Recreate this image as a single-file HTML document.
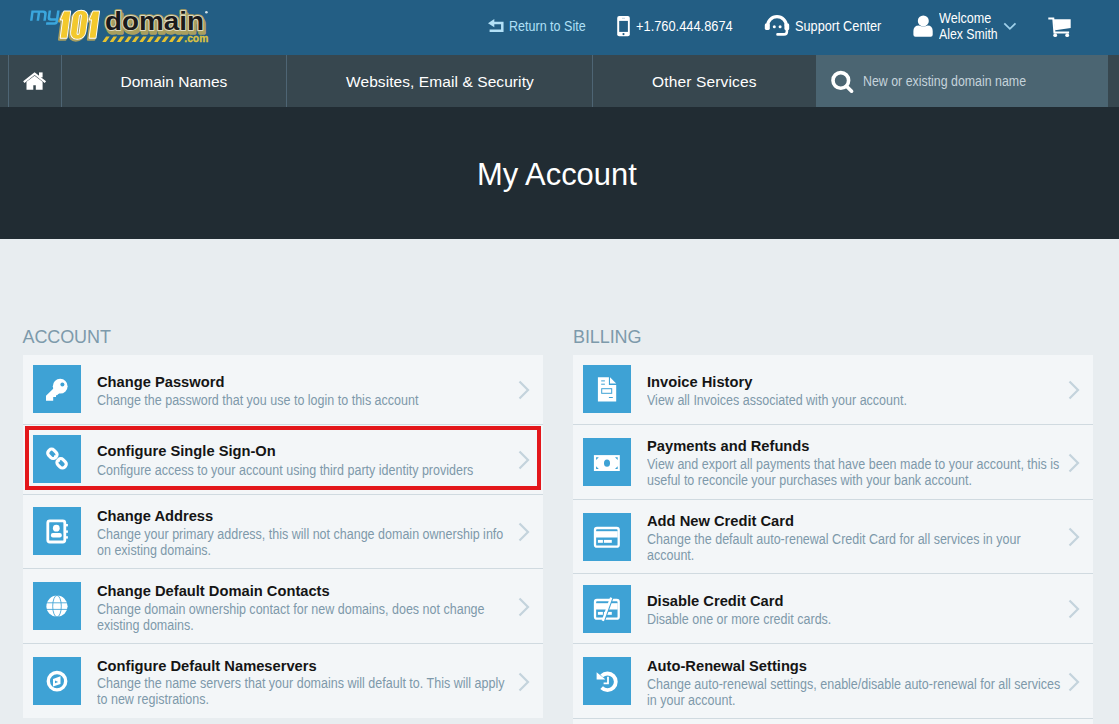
<!DOCTYPE html>
<html><head><meta charset="utf-8">
<style>
*{margin:0;padding:0;box-sizing:border-box}
html,body{width:1119px;height:724px;overflow:hidden}
body{font-family:"Liberation Sans",sans-serif;background:#e8edf0;position:relative}
.abs{position:absolute;white-space:nowrap}
.hd{position:absolute;white-space:nowrap;font-size:14px;line-height:14px;color:#fff;transform-origin:0 0}
.navt{position:absolute;white-space:nowrap;font-size:15.5px;line-height:15.5px;color:#fff}
.card{width:520px;background:#f3f6f8}
.sepl{width:520px;height:1px;background:#d0dae0}
.ttl{font-size:15.5px;line-height:18px;font-weight:bold;color:#151515;transform-origin:0 0;transform:scaleX(0.948)}
.dsc{font-size:14px;line-height:16px;color:#7e99aa;transform-origin:0 0;transform:scaleX(0.894)}
.sect{position:absolute;font-size:18px;line-height:18px;color:#7d9aab;letter-spacing:-0.1px}
</style></head><body>
<div class="abs" style="left:0;top:0;width:1119px;height:55px;background:#235e84"></div>
<div class="abs" style="left:0;top:55px;width:1119px;height:52px;background:#37474f"></div>
<div class="abs" style="left:8px;top:55px;width:1px;height:52px;background:#4e6574"></div>
<div class="abs" style="left:61px;top:55px;width:1px;height:52px;background:#4e6574"></div>
<div class="abs" style="left:286px;top:55px;width:1px;height:52px;background:#4e6574"></div>
<div class="abs" style="left:592px;top:55px;width:1px;height:52px;background:#4e6574"></div>
<div class="abs" style="left:816px;top:55px;width:292px;height:52px;background:#4b6572"></div>
<div class="abs" style="left:0;top:107px;width:1119px;height:132px;background:#212c33"></div>

<svg class="abs" style="left:0;top:0" width="220" height="55" viewBox="0 0 220 55">
 <g transform="translate(2.84 0) skewX(-7.8)" fill="#3ba7dd">
  <path d="M30 20.7 V10.4 H42 Q45.8 10.4 45.8 14 V20.7 H43.3 V14.5 Q43.3 12.8 41.8 12.8 H39.1 V20.7 H36.6 V12.8 H32.5 V20.7 Z"/>
  <path transform="translate(-0.8 0)" d="M48 10.4 H50.5 V17 Q50.5 18.3 51.8 18.3 H56.5 V10.4 H59 V21.5 Q59 24.7 55.8 24.7 H47.3 V22.3 H55.3 Q56.5 22.3 56.5 21 V20.7 H51.5 Q48 20.7 48 17.2 Z"/>
 </g>
 <defs><g id="d101" transform="translate(5.03 0) skewX(-7.6)">
  <path d="M60.7 11.5 H66.7 V37.8 H60.7 V19.6 H58.4 Z"/>
  <path fill-rule="evenodd" d="M77.5 10.7 C81.9 10.7 84.7 13.5 84.7 18 V31.5 C84.7 36 81.9 38.8 77.5 38.8 C73.1 38.8 70.3 36 70.3 31.5 V18 C70.3 13.5 73.1 10.7 77.5 10.7 Z M77.5 14.4 C76.6 14.4 76 15 76 16 V33.2 C76 34.2 76.6 34.9 77.5 34.9 C78.4 34.9 79 34.2 79 33.2 V16 C79 15 78.4 14.4 77.5 14.4 Z"/>
  <path d="M89.6 11.5 H95.6 V37.8 H89.6 V19.6 H87.3 Z"/>
 </g></defs>
 <use href="#d101" transform="translate(-1.4 1.6)" fill="#a99f5e" stroke="#a99f5e" stroke-width="2.6" stroke-linejoin="round"/>
 <use href="#d101" fill="#fff" stroke="#fff" stroke-width="1.9" stroke-linejoin="round"/>
 <use href="#d101" fill="#f3c92e"/>
 <g font-family="Liberation Sans" font-weight="bold" font-size="25.5">
  <text x="106.5" y="32.8" fill="#a99f5e" stroke="#a99f5e" stroke-width="3.6" stroke-linejoin="round" textLength="99" lengthAdjust="spacingAndGlyphs">domain</text>
  <text x="105" y="30.2" fill="#a99f5e" stroke="#a99f5e" stroke-width="3.6" stroke-linejoin="round" textLength="99" lengthAdjust="spacingAndGlyphs">domain</text>
  <text x="105" y="30.2" fill="#dcd8bc" stroke="#dcd8bc" stroke-width="1.9" stroke-linejoin="round" textLength="99" lengthAdjust="spacingAndGlyphs">domain</text>
  <text x="105" y="30.2" fill="#1b1b1b" textLength="99" lengthAdjust="spacingAndGlyphs">domain</text>
 </g>
 <g fill="#e5c231">
  <path d="M102.3 42 l3.8 -5.6 h3.6 l-3.8 5.6z M109.7 42 l3.8 -5.6 h3.6 l-3.8 5.6z M117.1 42 l3.8 -5.6 h3.6 l-3.8 5.6z M124.5 42 l3.8 -5.6 h3.6 l-3.8 5.6z M131.9 42 l3.8 -5.6 h3.6 l-3.8 5.6z M139.3 42 l3.8 -5.6 h3.6 l-3.8 5.6z M146.7 42 l3.8 -5.6 h3.6 l-3.8 5.6z M154.1 42 l3.8 -5.6 h3.6 l-3.8 5.6z M161.5 42 l3.8 -5.6 h3.6 l-3.8 5.6z M168.9 42 l3.8 -5.6 h3.6 l-3.8 5.6z M176.3 42 l3.8 -5.6 h3.6 l-3.8 5.6z"/>
 </g>
 <text x="184.3" y="42.2" font-family="Liberation Sans" font-weight="bold" font-size="10" fill="#dcc443" stroke="#dcc443" stroke-width="0.3" textLength="24" lengthAdjust="spacingAndGlyphs">.com</text>
 <circle cx="206.4" cy="12.3" r="1.3" fill="#cfe0ea"/>
</svg>
<div class="hd" style="left:509px;top:19px;color:#b0e0f7;transform:scaleX(0.895)">Return to Site</div>
<div class="hd" style="left:636px;top:19px;transform:scaleX(0.917)">+1.760.444.8674</div>
<div class="hd" style="left:795px;top:19.2px;transform:scaleX(0.909)">Support Center</div>
<div class="hd" style="left:939.3px;top:11px;transform:scaleX(0.90)">Welcome</div>
<div class="hd" style="left:939.3px;top:26.7px;transform:scaleX(0.877)">Alex Smith</div>
<div class="navt" style="left:120.5px;top:73.6px">Domain Names</div>
<div class="navt" style="left:346px;top:73.6px;letter-spacing:0.08px">Websites, Email &amp; Security</div>
<div class="navt" style="left:652px;top:73.6px;letter-spacing:0.15px">Other Services</div>
<div class="hd" style="left:862.7px;top:74.1px;color:#c5d3db;transform:scaleX(0.884)">New or existing domain name</div>

<svg class="abs" style="left:0;top:0" width="1119" height="107" viewBox="0 0 1119 107">
 <!-- return icon -->
 <path d="M488 23.2 L494.3 19 L494.3 27.3 Z" fill="#b3e0f6"/>
 <path d="M494 23.1 H502.3 V30.7 H489.6" fill="none" stroke="#b3e0f6" stroke-width="2.5"/>
 <!-- phone -->
 <rect x="617.2" y="15.9" width="12.6" height="20.3" rx="2" fill="#fff"/>
 <rect x="619.2" y="20.9" width="8.7" height="11" fill="#235e84"/>
 <circle cx="623.5" cy="34.1" r="1.1" fill="#235e84"/>
 <path d="M622 18.3 H625" stroke="#8fb0c6" stroke-width="0.6"/>
 <!-- headset -->
 <path d="M767.6 26 A9.4 9.4 0 0 1 786.4 26" fill="none" stroke="#fff" stroke-width="3.2"/>
 <rect x="764.8" y="23.6" width="5" height="6.4" rx="1.4" fill="#fff"/>
 <rect x="784.4" y="23.6" width="4.8" height="6.6" rx="1.4" fill="#fff"/>
 <circle cx="774.3" cy="26.7" r="1.5" fill="#fff"/><circle cx="780.1" cy="26.7" r="1.5" fill="#fff"/>
 <path d="M786.9 29 V31.5 Q786.9 34.4 784 34.4 H777.5" fill="none" stroke="#fff" stroke-width="2.6" stroke-linecap="round"/>
 <!-- user -->
 <circle cx="923.3" cy="20.9" r="5.5" fill="#fff"/>
 <path d="M913.4 34.7 V31 Q913.4 25.4 919 25.4 Q923.3 27.6 927.6 25.4 Q932.7 25.4 932.7 31 V34.7 Q932.7 36.7 930.7 36.7 H915.4 Q913.4 36.7 913.4 34.7 Z" fill="#fff"/>
 <!-- chevron down -->
 <path d="M1004.3 23.3 L1009.9 28.8 L1015.5 23.3" fill="none" stroke="#9fd0ea" stroke-width="1.8"/>
 <!-- cart -->
 <path d="M1048.3 18.6 H1053.3 L1054.4 32.5 H1069.1" fill="none" stroke="#fff" stroke-width="2"/>
 <path d="M1053.3 19.2 H1070.7 V28 L1055.2 30.2 Z" fill="#fff"/>
 <circle cx="1055.2" cy="35.2" r="1.9" fill="#fff"/><circle cx="1067.2" cy="35.2" r="1.9" fill="#fff"/>
 <!-- home -->
 <path d="M23.8 82.1 L34.6 73.6 L45.4 82.1" fill="none" stroke="#fff" stroke-width="2.1"/>
 <rect x="39" y="72.4" width="3.6" height="5" fill="#fff"/>
 <path d="M26.5 81.8 L34.6 75.8 L42.6 81.8 V89.7 H35.8 V85.2 H33.3 V89.7 H26.5 Z" fill="#fff"/>
 <!-- search -->
 <circle cx="840.8" cy="80.4" r="7.8" fill="none" stroke="#fff" stroke-width="3.6"/>
 <path d="M846.5 86.2 L851.6 91.2" stroke="#fff" stroke-width="3.6" stroke-linecap="round"/>
</svg>
<div class="abs" style="left:477.4px;top:157.6px;font-size:32px;line-height:32px;color:#fff;transform-origin:0 0;transform:scaleX(0.966)">My Account</div>
<div class="sect" style="left:22.5px;top:327.6px">ACCOUNT</div>
<div class="sect" style="left:573px;top:327.6px">BILLING</div>
<div class="abs card" style="left:23px;top:355px;height:69px"></div>
<div class="abs sepl" style="left:23px;top:424px"></div>
<svg class="abs" style="left:33px;top:365px" width="48" height="48" viewBox="0 0 48 48"><rect width="48" height="48" fill="#3ea2d5"/><circle cx="27.2" cy="21.2" r="7.4" fill="#fff"/><circle cx="29.4" cy="19.6" r="2" fill="#3ea2d5"/>
<path d="M21.5 22.5 L26.5 28 L24 30.3 L23 30.3 L23 32 L20.2 32 L20.2 35.8 L13 35.8 L13 30.8 Z" fill="#fff"/></svg>
<div class="abs ttl" style="left:97px;top:373.03px">Change Password</div>
<div class="abs dsc" style="left:97px;top:391.85px">Change the password that you use to login to this account</div>
<svg class="abs" style="left:517px;top:380.0px" width="14" height="20" viewBox="0 0 14 20"><path d="M2.5 1.5 L11 10 L2.5 18.5" fill="none" stroke="#c4d3dc" stroke-width="2.2"/></svg>
<div class="abs card" style="left:23px;top:425px;height:69px"></div>
<div class="abs sepl" style="left:23px;top:494px"></div>
<svg class="abs" style="left:33px;top:435px" width="48" height="48" viewBox="0 0 48 48"><rect width="48" height="48" fill="#3ea2d5"/><g transform="rotate(45 19.4 18.8)"><rect x="14.6" y="15.1" width="9.6" height="7.4" rx="3.2" fill="none" stroke="#fff" stroke-width="3.2"/><rect x="22" y="18" width="2.6" height="1.6" fill="#fff"/></g>
<g transform="rotate(45 28.6 28.3)"><rect x="23.8" y="24.6" width="9.6" height="7.4" rx="3.2" fill="none" stroke="#fff" stroke-width="3.2"/><rect x="23.4" y="27.5" width="2.6" height="1.6" fill="#fff"/></g></svg>
<div class="abs ttl" style="left:97px;top:442.43px">Configure Single Sign-On</div>
<div class="abs dsc" style="left:97px;top:461.95px">Configure access to your account using third party identity providers</div>
<svg class="abs" style="left:517px;top:450.0px" width="14" height="20" viewBox="0 0 14 20"><path d="M2.5 1.5 L11 10 L2.5 18.5" fill="none" stroke="#c4d3dc" stroke-width="2.2"/></svg>
<div class="abs card" style="left:23px;top:495px;height:73px"></div>
<div class="abs sepl" style="left:23px;top:568px"></div>
<svg class="abs" style="left:33px;top:507px" width="48" height="48" viewBox="0 0 48 48"><rect width="48" height="48" fill="#3ea2d5"/><rect x="14.8" y="13.8" width="17" height="21.2" rx="2" fill="none" stroke="#fff" stroke-width="2.8"/>
<rect x="33" y="17" width="1.9" height="2.4" fill="#fff"/><rect x="33" y="23.4" width="1.9" height="2.4" fill="#fff"/><rect x="33" y="29.2" width="1.9" height="2.4" fill="#fff"/>
<circle cx="23.3" cy="21.2" r="3.4" fill="#fff"/><rect x="17.9" y="26.1" width="10.9" height="4.4" rx="2" fill="#fff"/></svg>
<div class="abs ttl" style="left:97px;top:507.43px">Change Address</div>
<div class="abs dsc" style="left:97px;top:525.95px">Change your primary address, this will not change domain ownership info<br>on existing domains.</div>
<svg class="abs" style="left:517px;top:522.0px" width="14" height="20" viewBox="0 0 14 20"><path d="M2.5 1.5 L11 10 L2.5 18.5" fill="none" stroke="#c4d3dc" stroke-width="2.2"/></svg>
<div class="abs card" style="left:23px;top:569px;height:74px"></div>
<div class="abs sepl" style="left:23px;top:643px"></div>
<svg class="abs" style="left:33px;top:582px" width="48" height="48" viewBox="0 0 48 48"><rect width="48" height="48" fill="#3ea2d5"/><circle cx="24" cy="24.2" r="10.6" fill="#fff"/>
<path d="M13 20.8 H35 M13 27.4 H35" stroke="#3ea2d5" stroke-width="0.85"/>
<ellipse cx="24" cy="24.2" rx="4.3" ry="10.8" fill="none" stroke="#3ea2d5" stroke-width="0.85"/></svg>
<div class="abs ttl" style="left:97px;top:582.43px">Change Default Domain Contacts</div>
<div class="abs dsc" style="left:97px;top:600.75px">Change domain ownership contact for new domains, does not change<br>existing domains.</div>
<svg class="abs" style="left:517px;top:596.5px" width="14" height="20" viewBox="0 0 14 20"><path d="M2.5 1.5 L11 10 L2.5 18.5" fill="none" stroke="#c4d3dc" stroke-width="2.2"/></svg>
<div class="abs card" style="left:23px;top:644px;height:74px"></div>
<svg class="abs" style="left:33px;top:657px" width="48" height="48" viewBox="0 0 48 48"><rect width="48" height="48" fill="#3ea2d5"/><circle cx="24" cy="24.2" r="8.7" fill="none" stroke="#fff" stroke-width="3.4"/>
<path d="M20 21.9 L27.5 19.2 L27.5 26.9 L20 29.6 Z" fill="#fff"/><path d="M22 23.5 L25.2 25 L22 26.3 Z" fill="#3ea2d5"/></svg>
<div class="abs ttl" style="left:97px;top:657.23px">Configure Default Nameservers</div>
<div class="abs dsc" style="left:97px;top:675.45px">Change the name servers that your domains will default to. This will apply<br>to new registrations.</div>
<svg class="abs" style="left:517px;top:671.5px" width="14" height="20" viewBox="0 0 14 20"><path d="M2.5 1.5 L11 10 L2.5 18.5" fill="none" stroke="#c4d3dc" stroke-width="2.2"/></svg>
<div class="abs card" style="left:573px;top:355px;height:69px"></div>
<div class="abs sepl" style="left:573px;top:424px"></div>
<svg class="abs" style="left:583px;top:365px" width="48" height="48" viewBox="0 0 48 48"><rect width="48" height="48" fill="#3ea2d5"/><path d="M14.9 12.3 H25.9 V19.9 H33.2 V36.5 H14.9 Z" fill="#fff"/><path d="M27 12.3 L33.2 18.6 H27 Z" fill="#fff"/>
<path d="M18.2 15.9 H21.9 M18.2 19.2 H21.9 M25.9 32.5 H29.8" stroke="#3ea2d5" stroke-width="1"/>
<rect x="18.7" y="23.7" width="10" height="4.6" fill="none" stroke="#3ea2d5" stroke-width="1"/></svg>
<div class="abs ttl" style="left:647px;top:372.93px">Invoice History</div>
<div class="abs dsc" style="left:647px;top:391.75px">View all Invoices associated with your account.</div>
<svg class="abs" style="left:1067px;top:380.0px" width="14" height="20" viewBox="0 0 14 20"><path d="M2.5 1.5 L11 10 L2.5 18.5" fill="none" stroke="#c4d3dc" stroke-width="2.2"/></svg>
<div class="abs card" style="left:573px;top:425px;height:74px"></div>
<div class="abs sepl" style="left:573px;top:499px"></div>
<svg class="abs" style="left:583px;top:438px" width="48" height="48" viewBox="0 0 48 48"><rect width="48" height="48" fill="#3ea2d5"/><rect x="10.9" y="17.1" width="25.9" height="15.9" fill="#fff"/>
<ellipse cx="24" cy="25.2" rx="3" ry="3.6" fill="#3ea2d5"/>
<path d="M13.1 19.3 h2.7 l-2.7 2.7 z M34.7 19.3 h-2.7 l2.7 2.7 z M13.1 31 h2.7 l-2.7 -2.7 z M34.7 31 h-2.7 l2.7 -2.7 z" fill="#3ea2d5"/></svg>
<div class="abs ttl" style="left:647px;top:437.33px">Payments and Refunds</div>
<div class="abs dsc" style="left:647px;top:456.35px">View and export all payments that have been made to your account, this is<br>useful to reconcile your purchases with your bank account.</div>
<svg class="abs" style="left:1067px;top:452.5px" width="14" height="20" viewBox="0 0 14 20"><path d="M2.5 1.5 L11 10 L2.5 18.5" fill="none" stroke="#c4d3dc" stroke-width="2.2"/></svg>
<div class="abs card" style="left:573px;top:500px;height:73px"></div>
<div class="abs sepl" style="left:573px;top:573px"></div>
<svg class="abs" style="left:583px;top:513px" width="48" height="48" viewBox="0 0 48 48"><rect width="48" height="48" fill="#3ea2d5"/><rect x="12" y="15" width="23.7" height="18.7" rx="2" fill="none" stroke="#fff" stroke-width="2.3"/>
<rect x="13" y="18.2" width="21.7" height="6.3" fill="#fff"/>
<rect x="14.9" y="26.9" width="5" height="2.9" fill="#fff"/><rect x="20.9" y="26.9" width="7.9" height="2.9" fill="#fff"/></svg>
<div class="abs ttl" style="left:647px;top:512.23px">Add New Credit Card</div>
<div class="abs dsc" style="left:647px;top:530.75px">Change the default auto-renewal Credit Card for all services in your<br>account.</div>
<svg class="abs" style="left:1067px;top:527.0px" width="14" height="20" viewBox="0 0 14 20"><path d="M2.5 1.5 L11 10 L2.5 18.5" fill="none" stroke="#c4d3dc" stroke-width="2.2"/></svg>
<div class="abs card" style="left:573px;top:574px;height:69px"></div>
<div class="abs sepl" style="left:573px;top:643px"></div>
<svg class="abs" style="left:583px;top:585px" width="48" height="48" viewBox="0 0 48 48"><rect width="48" height="48" fill="#3ea2d5"/><rect x="12" y="15" width="23.7" height="18.7" rx="2" fill="none" stroke="#fff" stroke-width="2.3"/>
<rect x="13" y="18.2" width="21.7" height="6.3" fill="#fff"/>
<rect x="14.9" y="26.9" width="5" height="2.9" fill="#fff"/><rect x="20.9" y="26.9" width="7.9" height="2.9" fill="#fff"/>
<path d="M29.3 12.6 L20.9 35.8" stroke="#3ea2d5" stroke-width="2.4"/><path d="M28.2 12.6 L19.8 35.8" stroke="#fff" stroke-width="2.4"/></svg>
<div class="abs ttl" style="left:647px;top:592.23px">Disable Credit Card</div>
<div class="abs dsc" style="left:647px;top:610.55px">Disable one or more credit cards.</div>
<svg class="abs" style="left:1067px;top:599.0px" width="14" height="20" viewBox="0 0 14 20"><path d="M2.5 1.5 L11 10 L2.5 18.5" fill="none" stroke="#c4d3dc" stroke-width="2.2"/></svg>
<div class="abs card" style="left:573px;top:644px;height:74px"></div>
<div class="abs sepl" style="left:573px;top:718px"></div>
<svg class="abs" style="left:583px;top:657px" width="48" height="48" viewBox="0 0 48 48"><rect width="48" height="48" fill="#3ea2d5"/><path d="M18.63 30.67 A8.3 8.3 0 1 0 18.63 18.93" fill="none" stroke="#fff" stroke-width="3.8"/>
<path d="M13.6 15.2 L13.6 22.6 L21.8 22.6 L22.2 22.2 Z" fill="#fff"/>
<path d="M25 19.8 V26.3 H20.6" fill="none" stroke="#fff" stroke-width="1.8"/></svg>
<div class="abs ttl" style="left:647px;top:657.23px">Auto-Renewal Settings</div>
<div class="abs dsc" style="left:647px;top:675.75px">Change auto-renewal settings, enable/disable auto-renewal for all services<br>in your account.</div>
<svg class="abs" style="left:1067px;top:671.5px" width="14" height="20" viewBox="0 0 14 20"><path d="M2.5 1.5 L11 10 L2.5 18.5" fill="none" stroke="#c4d3dc" stroke-width="2.2"/></svg>
<div class="abs card" style="left:573px;top:719px;height:10px"></div>
<div class="abs" style="left:25px;top:426px;width:516px;height:64px;border:4px solid #e3171b"></div>
</body></html>
